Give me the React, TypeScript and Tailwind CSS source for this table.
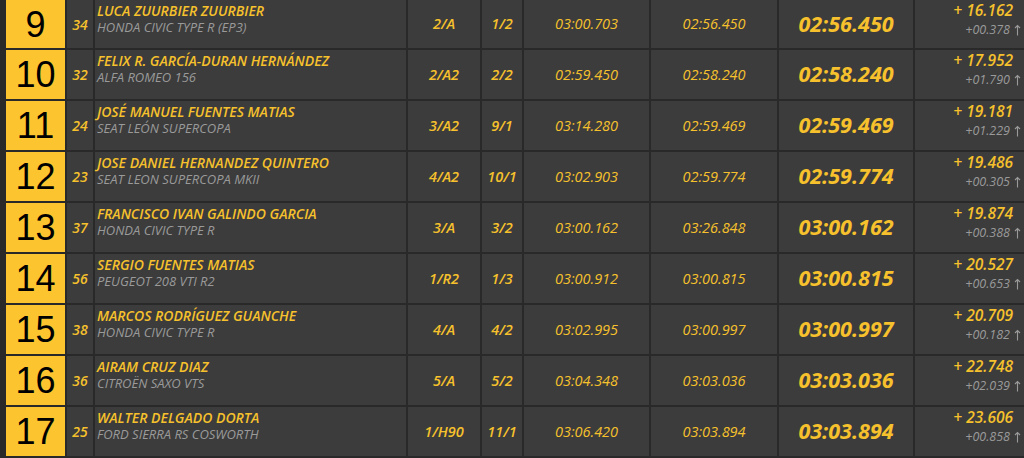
import React from 'react';

interface Result {
  pos: number;
  num: string;
  driver: string;
  car: string;
  cls: string;
  cat: string;
  t1: string;
  t2: string;
  best: string;
  gap: string;
  diff: string;
}

const results: Result[] = [
  { pos: 9, num: '34', driver: 'LUCA ZUURBIER ZUURBIER', car: 'HONDA CIVIC TYPE R (EP3)', cls: '2/A', cat: '1/2', t1: '03:00.703', t2: '02:56.450', best: '02:56.450', gap: '+ 16.162', diff: '+00.378' },
  { pos: 10, num: '32', driver: 'FELIX R. GARCÍA-DURAN HERNÁNDEZ', car: 'ALFA ROMEO 156', cls: '2/A2', cat: '2/2', t1: '02:59.450', t2: '02:58.240', best: '02:58.240', gap: '+ 17.952', diff: '+01.790' },
  { pos: 11, num: '24', driver: 'JOSÉ MANUEL FUENTES MATIAS', car: 'SEAT LEÓN SUPERCOPA', cls: '3/A2', cat: '9/1', t1: '03:14.280', t2: '02:59.469', best: '02:59.469', gap: '+ 19.181', diff: '+01.229' },
  { pos: 12, num: '23', driver: 'JOSE DANIEL HERNANDEZ QUINTERO', car: 'SEAT LEON SUPERCOPA MKII', cls: '4/A2', cat: '10/1', t1: '03:02.903', t2: '02:59.774', best: '02:59.774', gap: '+ 19.486', diff: '+00.305' },
  { pos: 13, num: '37', driver: 'FRANCISCO IVAN GALINDO GARCIA', car: 'HONDA CIVIC TYPE R', cls: '3/A', cat: '3/2', t1: '03:00.162', t2: '03:26.848', best: '03:00.162', gap: '+ 19.874', diff: '+00.388' },
  { pos: 14, num: '56', driver: 'SERGIO FUENTES MATIAS', car: 'PEUGEOT 208 VTI R2', cls: '1/R2', cat: '1/3', t1: '03:00.912', t2: '03:00.815', best: '03:00.815', gap: '+ 20.527', diff: '+00.653' },
  { pos: 15, num: '38', driver: 'MARCOS RODRÍGUEZ GUANCHE', car: 'HONDA CIVIC TYPE R', cls: '4/A', cat: '4/2', t1: '03:02.995', t2: '03:00.997', best: '03:00.997', gap: '+ 20.709', diff: '+00.182' },
  { pos: 16, num: '36', driver: 'AIRAM CRUZ DIAZ', car: 'CITROËN SAXO VTS', cls: '5/A', cat: '5/2', t1: '03:04.348', t2: '03:03.036', best: '03:03.036', gap: '+ 22.748', diff: '+02.039' },
  { pos: 17, num: '25', driver: 'WALTER DELGADO DORTA', car: 'FORD SIERRA RS COSWORTH', cls: '1/H90', cat: '11/1', t1: '03:06.420', t2: '03:03.894', best: '03:03.894', gap: '+ 23.606', diff: '+00.858' },
];

const cell = 'bg-[#3c3c3c] flex items-center justify-center';

const UpArrow = () => (
  <svg width="7" height="12" viewBox="0 0 7 12" className="ml-[4px]" fill="none">
    <path d="M3.5 11.5V1.5M1 4L3.5 1.5L6 4" stroke="#9a9a9a" strokeWidth="1.1" />
  </svg>
);

const ResultRow: React.FC<{ r: Result; first?: boolean }> = ({ r, first }) => (
  <div className={`flex gap-[2px] shrink-0 ${first ? 'h-[48px]' : 'h-[49px]'}`}>
    <div className="w-[59px] bg-[#fcc42f] flex items-center justify-center pt-[1px] text-black text-[36px] leading-none font-['Liberation_Sans',sans-serif]">
      {r.pos}
    </div>
    <div className={`${cell} w-[26px] text-[14px] font-semibold italic text-[#f6c12c]`}>{r.num}</div>
    <div className="w-[311px] bg-[#3c3c3c] flex flex-col pl-[2px] pt-[2px] italic">
      <span className="text-[14px] leading-[17px] font-semibold text-[#f6c12c]">{r.driver}</span>
      <span className="text-[13px] leading-[16px] text-[#9a9a9a]">{r.car}</span>
    </div>
    <div className={`${cell} w-[72px] text-[14.5px] font-semibold italic text-[#f6c12c]`}>{r.cls}</div>
    <div className={`${cell} w-[40px] text-[14.5px] font-semibold italic text-[#f6c12c]`}>{r.cat}</div>
    <div className={`${cell} w-[125px] text-[14.5px] font-medium italic text-[#f6c12c]`}>{r.t1}</div>
    <div className={`${cell} w-[126px] text-[14.5px] font-medium italic text-[#f6c12c]`}>{r.t2}</div>
    <div className={`${cell} w-[134px] text-[21.5px] font-bold italic text-[#f6c12c]`}>{r.best}</div>
    <div className="flex-1 bg-[#3c3c3c] flex flex-col items-end pr-[3px] italic">
      <span className="text-[15.5px] leading-[21px] font-semibold text-[#f6c12c] mr-[8px]">{r.gap}</span>
      <span className="text-[12.5px] leading-[17px] text-[#9a9a9a] flex items-center">
        {r.diff}
        <UpArrow />
      </span>
    </div>
  </div>
);

export default function App() {
  return (
    <div className="w-[1024px] h-[458px] overflow-hidden bg-[#292929] font-['Open_Sans',sans-serif]">
      <div className="flex flex-col gap-[2px] pl-[6px]">
        {results.map((r, i) => (
          <ResultRow key={r.pos} r={r} first={i === 0} />
        ))}
      </div>
    </div>
  );
}
